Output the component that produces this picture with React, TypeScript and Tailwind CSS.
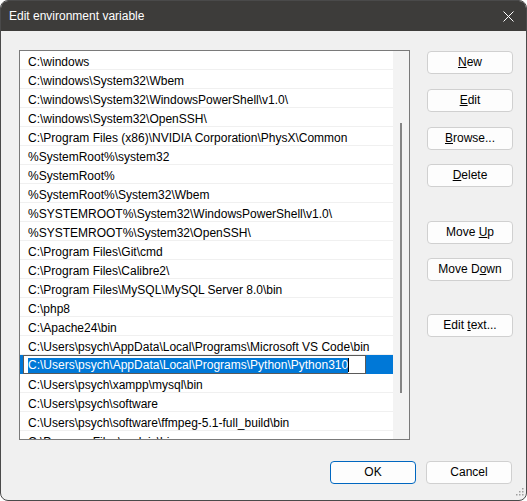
import type React from 'react';

const paths = [
  'C:\\windows',
  'C:\\windows\\System32\\Wbem',
  'C:\\windows\\System32\\WindowsPowerShell\\v1.0\\',
  'C:\\windows\\System32\\OpenSSH\\',
  'C:\\Program Files (x86)\\NVIDIA Corporation\\PhysX\\Common',
  '%SystemRoot%\\system32',
  '%SystemRoot%',
  '%SystemRoot%\\System32\\Wbem',
  '%SYSTEMROOT%\\System32\\WindowsPowerShell\\v1.0\\',
  '%SYSTEMROOT%\\System32\\OpenSSH\\',
  'C:\\Program Files\\Git\\cmd',
  'C:\\Program Files\\Calibre2\\',
  'C:\\Program Files\\MySQL\\MySQL Server 8.0\\bin',
  'C:\\php8',
  'C:\\Apache24\\bin',
  'C:\\Users\\psych\\AppData\\Local\\Programs\\Microsoft VS Code\\bin',
  'C:\\Users\\psych\\AppData\\Local\\Programs\\Python\\Python310',
  'C:\\Users\\psych\\xampp\\mysql\\bin',
  'C:\\Users\\psych\\software',
  'C:\\Users\\psych\\software\\ffmpeg-5.1-full_build\\bin',
  'C:\\Program Files\\nodejs\\bin',
];

const SELECTED = 16;

const Btn: React.FC<{
  children: React.ReactNode;
  primary?: boolean;
  className?: string;
}> = ({ children, primary, className = '' }) => (
  <button
    type="button"
    className={`block h-[23px] w-[86px] shrink-0 rounded-[4px] border bg-[#fdfdfd] text-[12px] leading-[21px] text-black ${
      primary ? 'border-[#0067c0]' : 'border-[#d0d0d0]'
    } ${className}`}
  >
    {children}
  </button>
);

export default function App() {
  return (
    <div
      className="h-[501px] w-[527px] overflow-hidden rounded-[8px] border border-[#4a4a4a] bg-[#f0f0f0] flex flex-col"
      style={{ fontFamily: '"Liberation Sans", Arial, sans-serif' }}
    >
      <div className="h-[30px] shrink-0 bg-[#3d3c3a] flex items-center justify-between pl-[8px] pr-[12px]">
        <span className="text-[12px] text-white">Edit environment variable</span>
        <svg width="11" height="11" viewBox="0 0 11 11" className="text-white">
          <path d="M0.5 0.5L10.5 10.5M10.5 0.5L0.5 10.5" stroke="currentColor" strokeWidth="1" />
        </svg>
      </div>

      <div className="flex-1 relative flex flex-col">
        <div className="flex pt-[19px] pl-[18px]">
          <div className="h-[390px] w-[391px] border border-[#7a7a7a] bg-white flex overflow-hidden">
            <div className="flex-1 flex flex-col">
              {paths.map((p, i) =>
                i === SELECTED ? (
                  <div
                    key={p}
                    className="h-[19px] shrink-0 bg-[#0078d7] flex items-center pl-[3px]"
                  >
                    <div className="h-[19px] w-[343px] border border-[#5a5a5a] bg-white flex items-center pl-[4px] pt-[1px]">
                      <span className="bg-[#0078d7] text-white text-[12px] leading-[15px] whitespace-nowrap">
                        {p}
                      </span>
                      <span className="h-[14px] w-px bg-black" />
                    </div>
                  </div>
                ) : (
                  <div
                    key={p}
                    className="h-[19px] shrink-0 border-b border-[#f0f0f0] flex items-center pt-[4px] pl-[8px] text-[12px] leading-[14px] text-black whitespace-nowrap"
                  >
                    {p}
                  </div>
                ),
              )}
            </div>
            <div className="w-[16px] shrink-0 bg-[#f3f3f3] pt-[72px]">
              <div className="ml-[7px] h-[270px] w-[2px] bg-[#858585]" />
            </div>
          </div>

          <div className="ml-[17px] flex flex-col">
            <Btn className="mt-[1px]">
              <u>N</u>ew
            </Btn>
            <Btn className="mt-[15px]">
              <u>E</u>dit
            </Btn>
            <Btn className="mt-[15px]">
              <u>B</u>rowse...
            </Btn>
            <Btn className="mt-[14px]">
              <u>D</u>elete
            </Btn>
            <Btn className="mt-[34px]">
              Move <u>U</u>p
            </Btn>
            <Btn className="mt-[14px]">
              Move D<u>o</u>wn
            </Btn>
            <Btn className="mt-[33px]">
              Edit <u>t</u>ext...
            </Btn>
          </div>
        </div>

        <div className="flex justify-end gap-[10px] pr-[14px] pt-[21px]">
          <Btn primary>OK</Btn>
          <Btn>Cancel</Btn>
        </div>

        <svg
          width="10"
          height="10"
          viewBox="0 0 10 10"
          className="absolute right-[2px] bottom-[2px]"
        >
          {[
            [8, 0],
            [8, 3],
            [5, 3],
            [8, 6],
            [5, 6],
            [2, 6],
          ].map(([x, y]) => (
            <rect key={`${x}-${y}`} x={x} y={y} width="1.5" height="1.5" fill="#a0a0a0" />
          ))}
        </svg>
      </div>
    </div>
  );
}
